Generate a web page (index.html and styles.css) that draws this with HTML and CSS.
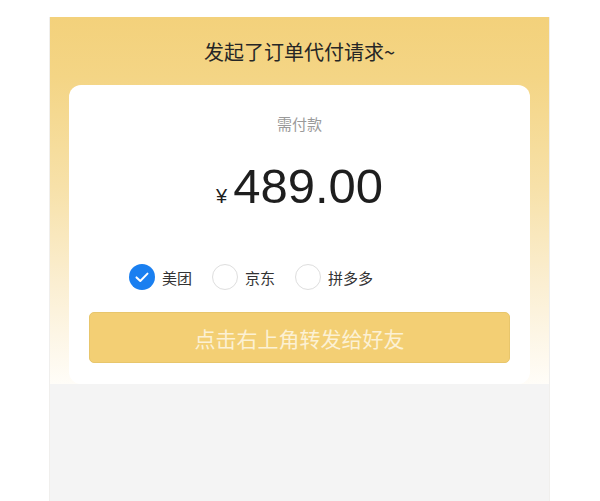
FILE: index.html
```html
<!DOCTYPE html>
<html lang="zh-CN">
<head>
  <meta charset="UTF-8" />
  <meta name="viewport" content="width=device-width, initial-scale=1.0" />
  <title>订单代付</title>
  <link rel="stylesheet" href="styles.css">
</head>
<body>
  <div class="panel">
    <h1 class="title">发起了订单代付请求~</h1>

    <div class="card">
      <div class="label">需付款</div>
      <div class="amount">
        <span class="currency">¥</span>
        <span class="value">489.00</span>
      </div>

      <div class="platforms">
        <label class="platform checked">
          <span class="radio">
            <svg viewBox="0 0 26 26" width="26" height="26">
              <path d="M7.5 13.4l3.8 3.6 7.2-7.4" fill="none" stroke="#fff" stroke-width="2" stroke-linecap="round" stroke-linejoin="round"/>
            </svg>
          </span>
          美团
        </label>
        <label class="platform">
          <span class="radio"></span>
          京东
        </label>
        <label class="platform">
          <span class="radio"></span>
          拼多多
        </label>
      </div>

      <button class="share">点击右上角转发给好友</button>
    </div>
  </div>
</body>
</html>
```

FILE: styles.css
```css
body {
  margin: 0;
  background: #fff;
  font-family: "Noto Sans CJK SC", "Liberation Sans", sans-serif;
  color: #333;
}

.panel {
  width: 501px;
  min-height: 484px;
  margin: 17px 0 0 49px;
  box-sizing: border-box;
  padding: 21px 20px 0;
  background: linear-gradient(to bottom,
    #f3d17b 0,
    #f4d585 60px,
    #f7e1a9 170px,
    #fbefd3 270px,
    #fef9ee 340px,
    #fffdf8 367px,
    #f4f4f4 367px);
  box-shadow: inset 1px 0 #f0efed, inset -1px 0 #f0efed;
}

.title {
  margin: 0 0 19px;
  font-size: 20px;
  line-height: 28px;
  font-weight: 400;
  text-align: center;
  color: #262626;
}

.card {
  background: #fff;
  border-radius: 12px;
  padding: 29px 20px 21px;
}

.label {
  font-size: 15px;
  line-height: 20px;
  color: #9a9a9a;
  text-align: center;
}

.amount {
  margin-top: 24px;
  display: flex;
  justify-content: center;
  align-items: baseline;
  height: 56px;
  line-height: 56px;
  font-family: "Liberation Sans", sans-serif;
  color: #1e1e1e;
}

.currency {
  font-size: 20px;
  margin-right: 6px;
}

.value {
  font-size: 49px;
}

.platforms {
  margin: 50px 0 22px 40px;
  display: flex;
  align-items: center;
  gap: 20px;
}

.platform {
  display: flex;
  align-items: center;
  gap: 7px;
  font-size: 15px;
  color: #333;
}

.radio {
  width: 26px;
  height: 26px;
  box-sizing: border-box;
  border-radius: 50%;
  border: 1.5px solid #dedede;
  display: flex;
}

.platform.checked .radio {
  border: none;
  background: #1a7ff0;
}

.share {
  display: block;
  width: 100%;
  height: 51px;
  border: 1px solid #e8c66c;
  border-radius: 5px;
  background: #f3cf74;
  color: #fcf1d4;
  font-family: "Noto Sans CJK SC", sans-serif;
  font-size: 21px;
  cursor: pointer;
}
```
